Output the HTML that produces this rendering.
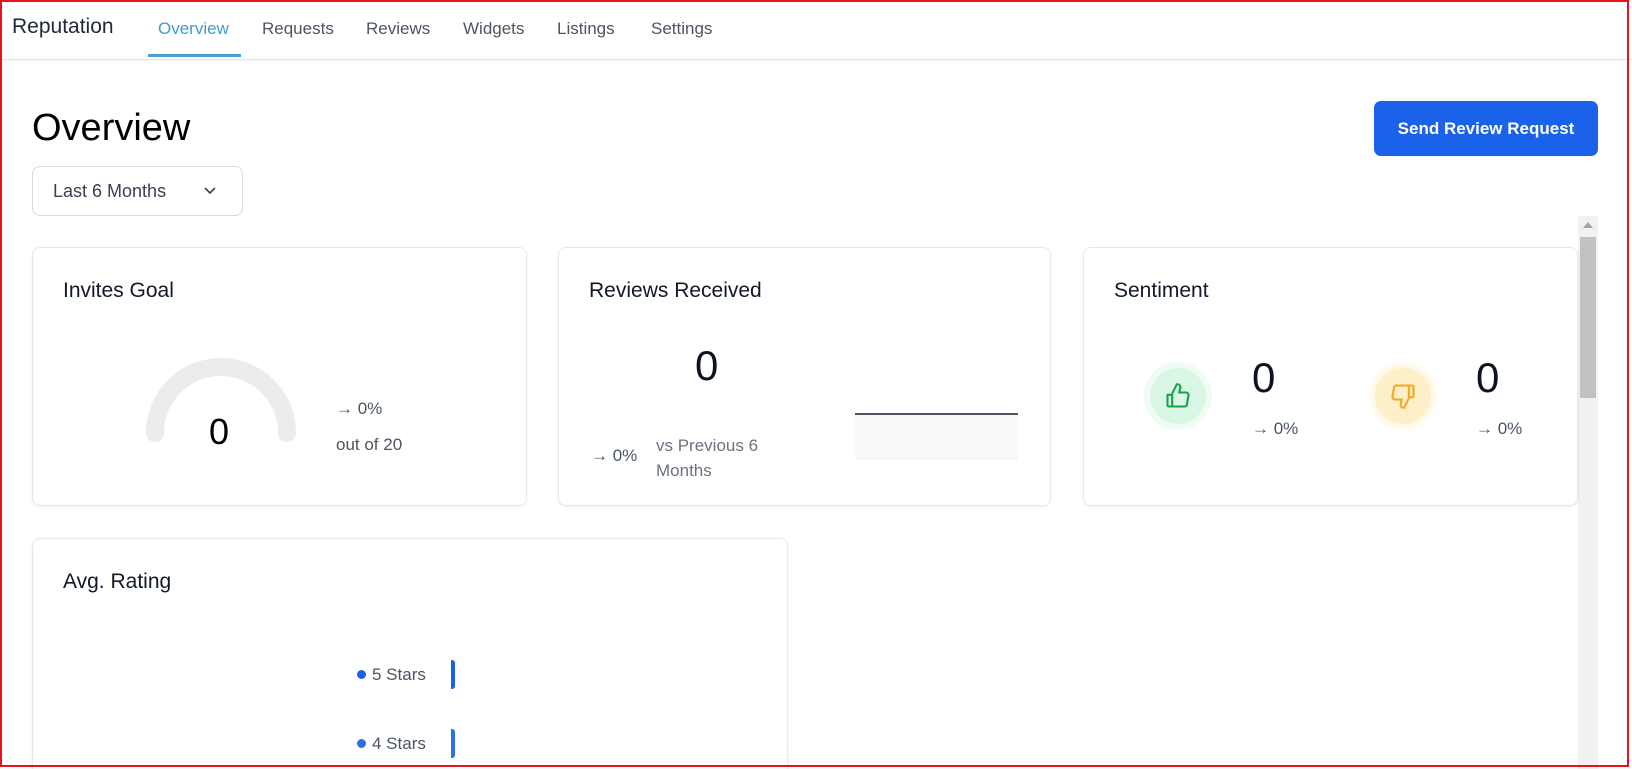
<!DOCTYPE html>
<html><head><meta charset="utf-8"><style>
*{margin:0;padding:0;box-sizing:border-box}
html,body{width:1632px;height:769px;overflow:hidden}
body{background:#fff;font-family:"Liberation Sans",sans-serif;position:relative;color:#111827}
.a{position:absolute;white-space:nowrap}
.frame{position:absolute;left:0;top:0;width:1629px;height:767px;border:2px solid #e5141b;z-index:10;pointer-events:none}
.nav{position:absolute;left:0;top:0;width:1632px;height:60px;border-bottom:1px solid #e2e4e8;box-shadow:0 1px 2px rgba(0,0,0,.05)}
.tab{position:absolute;top:19px;font-size:17px;color:#4b5563}
.card{position:absolute;border:1px solid #e8e9ec;border-radius:8px;background:#fff;box-shadow:0 1px 3px rgba(0,0,0,.06)}
.ct{position:absolute;left:30px;top:31px;font-size:21px;color:#111827}
.g{color:#4b5563;font-size:16px}
</style></head><body>
<div class="frame"></div>
<div class="nav">
<div class="a" style="left:12px;top:15px;font-size:21px;color:#1f2937">Reputation</div>
<div class="tab" style="left:158px;color:#3f9ccf">Overview</div>
<div style="position:absolute;left:148px;top:54px;width:93px;height:3px;background:#4a9fd0"></div>
<div class="tab" style="left:262px">Requests</div>
<div class="tab" style="left:366px">Reviews</div>
<div class="tab" style="left:463px">Widgets</div>
<div class="tab" style="left:557px">Listings</div>
<div class="tab" style="left:651px">Settings</div>
</div>
<div class="a" style="left:32px;top:107px;font-size:38px;color:#000">Overview</div>
<div class="a" style="left:1374px;top:101px;width:224px;height:55px;background:#1a62ea;border-radius:7px;color:#fff;font-weight:bold;font-size:17px;text-align:center;line-height:55px">Send Review Request</div>
<div class="a" style="left:32px;top:166px;width:211px;height:50px;border:1px solid #d6d9de;border-radius:8px;font-size:18px;color:#374151;padding-left:20px;line-height:48px">Last 6 Months
<svg style="position:absolute;left:170px;top:19px" width="14" height="10" viewBox="0 0 14 10"><path d="M2 2l5 5 5-5" fill="none" stroke="#374151" stroke-width="1.6"/></svg></div>
<div class="a" style="left:1578px;top:216px;width:20px;height:553px;background:#f1f1f1"></div>
<svg class="a" style="left:1583px;top:222px" width="10" height="6"><path d="M0 6L5 0L10 6Z" fill="#a3a3a3"/></svg>
<div class="a" style="left:1580px;top:237px;width:16px;height:161px;background:#c1c1c1"></div>

<div class="card" style="left:32px;top:247px;width:495px;height:259px">
<div class="ct">Invites Goal</div>
<svg style="position:absolute;left:108px;top:105px" width="160" height="100"><path d="M14 80A66 66 0 0 1 146 80" fill="none" stroke="#ececec" stroke-width="18" stroke-linecap="round"/></svg>
<div class="a" style="left:176px;top:163px;font-size:36px;color:#000">0</div>
<div class="a g" style="left:303px;top:151px;font-size:17px">→ 0%</div>
<div class="a g" style="left:303px;top:187px;font-size:17px">out of 20</div>
</div>

<div class="card" style="left:558px;top:247px;width:493px;height:259px">
<div class="ct">Reviews Received</div>
<div class="a" style="left:136px;top:94px;font-size:42px;color:#0b1220">0</div>
<div class="a g" style="left:32px;top:198px;font-size:17px">→ 0%</div>
<div class="a g" style="left:97px;top:185px;font-size:17px;line-height:25px;color:#6b7280">vs Previous 6<br>Months</div>
<div class="a" style="left:296px;top:165px;width:163px;height:47px;background:#f8f9fb;border-top:2px solid #4b5563"></div>
</div>

<div class="card" style="left:1083px;top:247px;width:495px;height:259px">
<div class="ct">Sentiment</div>
<div class="a" style="left:66px;top:120px;width:56px;height:56px;border-radius:50%;background:#d9f7e4;box-shadow:0 0 0 6px #effcf3"></div>
<svg class="a" style="left:80px;top:134px" width="28" height="28" viewBox="0 0 24 24"><path d="M7 10v11M3 11h4v10H4a1 1 0 0 1-1-1zM7 10l4-8a2.5 2.5 0 0 1 3 3l-1 4h6a2 2 0 0 1 2 2.3l-1.3 7.5A2 2 0 0 1 17.7 21H7" fill="none" stroke="#16a34a" stroke-width="1.8" stroke-linejoin="round"/></svg>
<div class="a" style="left:168px;top:106px;font-size:42px;color:#0b1220">0</div>
<div class="a g" style="left:168px;top:171px;font-size:17px">→ 0%</div>
<div class="a" style="left:291px;top:120px;width:56px;height:56px;border-radius:50%;background:#fdefc8;box-shadow:0 0 6px 4px #fff6df"></div>
<svg class="a" style="left:305px;top:134px" width="28" height="28" viewBox="0 0 24 24"><path d="M17 14V3M21 13h-4V3h3a1 1 0 0 1 1 1zM17 14l-4 8a2.5 2.5 0 0 1-3-3l1-4H5a2 2 0 0 1-2-2.3l1.3-7.5A2 2 0 0 1 6.3 3H17" fill="none" stroke="#f5a623" stroke-width="1.8" stroke-linejoin="round"/></svg>
<div class="a" style="left:392px;top:106px;font-size:42px;color:#0b1220">0</div>
<div class="a g" style="left:392px;top:171px;font-size:17px">→ 0%</div>
</div>

<div class="card" style="left:32px;top:538px;width:756px;height:240px">
<div class="ct">Avg. Rating</div>
<div class="a" style="left:324px;top:131px;width:9px;height:9px;border-radius:50%;background:#1a62ea"></div>
<div class="a g" style="left:339px;top:126px;font-size:17px">5 Stars</div>
<div class="a" style="left:418px;top:121px;width:4px;height:29px;background:#1a62ea;border-radius:0 3px 3px 0"></div>
<div class="a" style="left:324px;top:200px;width:9px;height:9px;border-radius:50%;background:#2f6fe8"></div>
<div class="a g" style="left:339px;top:195px;font-size:17px">4 Stars</div>
<div class="a" style="left:418px;top:190px;width:4px;height:29px;background:#2f6fe8;border-radius:0 3px 3px 0"></div>
</div>
</body></html>
